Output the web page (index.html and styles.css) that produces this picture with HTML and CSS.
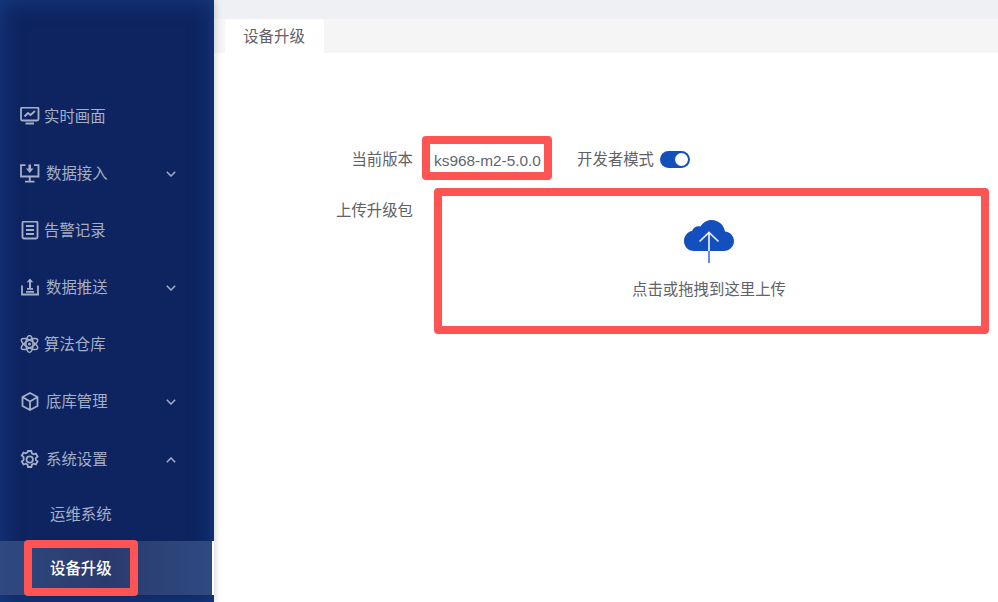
FILE: index.html
```html
<!DOCTYPE html>
<html lang="zh-CN">
<head>
<meta charset="utf-8">
<title>设备升级</title>
<link rel="stylesheet" href="styles.css">
</head>
<body>
<div class="app">
  <aside class="sidebar">
    <nav class="menu">
      <div class="item"><svg class="ico" viewBox="0 0 20 20"><rect x="1" y="0.500" width="17.500" height="13" rx="1.500"/><path d="M4.500 9.500l3.500-3.500 2.500 2 4.500-4M5.500 16.500h8.500"/></svg><span class="label">实时画面</span></div>
      <div class="item sub"><svg class="ico" viewBox="0 0 20 20"><path d="M5.500 1.200H1v11.300h17.500V1.200H14M9.750 12.500v4.500M5 17.700h9.500"/><path class="fill" d="M8.500.5h2.500v4h2.500L9.750 9 6 4.500h2.500z"/></svg><span class="label wide">数据接入</span><svg class="chev" viewBox="0 0 10 6"><path d="M.8.8L5 5l4.200-4.200"/></svg></div>
      <div class="item"><svg class="ico" viewBox="0 0 20 20"><rect x="2.500" y="0.500" width="15" height="17" rx="1.500"/><path d="M6 5h8M6 9h8M6 13h8"/></svg><span class="label">告警记录</span></div>
      <div class="item sub"><svg class="ico" viewBox="0 0 20 20"><path d="M2 7.500v9h16v-9M6 13.800h8M7 10.800h6"/><path class="fill" d="M10 .5l3.300 3.700H11v6H9v-6H6.700z"/></svg><span class="label wide">数据推送</span><svg class="chev" viewBox="0 0 10 6"><path d="M.8.8L5 5l4.200-4.200"/></svg></div>
      <div class="item"><svg class="ico atom" viewBox="0 0 20 20"><ellipse cx="9.500" cy="9" rx="9.200" ry="3.600" transform="rotate(30 9.500 9)"/><ellipse cx="9.500" cy="9" rx="9.200" ry="3.600" transform="rotate(-30 9.500 9)"/><ellipse cx="9.500" cy="9" rx="8.500" ry="3.600" transform="rotate(90 9.500 9)"/><circle class="fill" cx="9.500" cy="9" r="1.500"/></svg><span class="label">算法仓库</span></div>
      <div class="item sub"><svg class="ico" viewBox="0 0 20 20"><path d="M10 1l7.500 4v9l-7.500 4-7.500-4V5zM2.500 5l7.500 4.500L17.500 5M10 9.500V18"/></svg><span class="label wide">底库管理</span><svg class="chev" viewBox="0 0 10 6"><path d="M.8.8L5 5l4.200-4.200"/></svg></div>
      <div class="item sub open"><svg class="ico" viewBox="0 0 20 20"><path d="M8 1h3.400l.5 2.400 1.700.9 2.300-.8 1.700 3-1.800 1.600v1.800l1.800 1.600-1.700 3-2.300-.8-1.700.9-.5 2.400H8l-.5-2.400-1.700-.9-2.300.8-1.700-3 1.800-1.600V7.100L1.800 5.500l1.700-3 2.300.8 1.700-.9z"/><circle cx="9.700" cy="9.500" r="3.200"/></svg><span class="label wide">系统设置</span><svg class="chev" viewBox="0 0 10 6"><path d="M.8 5.200L5 1l4.200 4.200"/></svg></div>
      <div class="child">运维系统</div>
      <div class="child active">设备升级</div>
    </nav>
    <span class="mark mark-menu"></span>
  </aside>
  <main class="main">
    <div class="top"></div>
    <div class="tabs"><div class="tab">设备升级</div></div>
    <section class="content">
      <div class="row version-row">
        <span class="field">当前版本</span>
        <span class="version">ks968-m2-5.0.0</span>
        <span class="dev">开发者模式</span>
        <span class="switch"><span class="knob"></span></span>
      </div>
      <div class="row upload-row">
        <span class="field">上传升级包</span>
        <div class="upload">
          <svg class="cloud" viewBox="0 0 50 43"><path class="cloud-body" d="M10 31C4.500 31 0 27 0 21 0 15.500 4 11.500 8 11 9.500 7 13 5.500 16.500 6.500 19 2.500 23 0 27.500 0c7 0 12.500 5 13.500 11.500 5 .3 9 4.500 9 9.500 0 5.500-4.500 10-10 10z"/><path class="cloud-arrow" d="M25 31V13M15.500 21.500L25 12.500l9.500 9"/><path class="cloud-stem" d="M25 31v12"/></svg>
          <p class="hint">点击或拖拽到这里上传</p>
        </div>
      </div>
    </section>
  </main>
</div>
<span class="mark mark-version"></span>
<span class="mark mark-upload"></span>
</body>
</html>
```
FILE: styles.css
```css
* { box-sizing: border-box; }
html, body { margin: 0; height: 100%; overflow: hidden; }
body {
  position: relative;
  background: #fff;
  font-family: "Liberation Sans", "Noto Sans CJK SC", sans-serif;
  font-size: 15.4px;
  color: #606266;
}
.app { display: flex; height: 602px; }

.sidebar {
  position: relative;
  flex: 0 0 214px;
  background: #0e2460;
  box-shadow: inset 0 0 22px 1px #163c80, 2px 0 6px rgba(0, 0, 0, .14);
  padding-top: 88px;
  z-index: 1;
}
.menu { display: flex; flex-direction: column; }
.item {
  display: flex;
  align-items: center;
  height: 57px;
  padding-left: 20px;
  color: #a5afc6;
}
.item.open { padding-top: 2px; }
.ico {
  width: 20px;
  height: 20px;
  flex: none;
  fill: none;
  stroke: #a5afc6;
  stroke-width: 1.800;
}
.ico.atom { stroke-width: 1.500; }
.ico .fill { fill: #a5afc6; stroke: none; }
.label { margin-left: 4px; line-height: 20px; }
.label.wide { margin-left: 6px; }
.chev {
  width: 10px;
  height: 6px;
  margin-left: auto;
  margin-right: 38px;
  fill: none;
  stroke: #a5afc6;
  stroke-width: 1.500;
}
.child {
  height: 54px;
  line-height: 56px;
  padding-left: 50px;
  color: #a5afc6;
}
.child.active {
  color: #fff;
  font-weight: 500;
  background: linear-gradient(90deg, #2f4a80 0, #2a3a6e 50%, #2f4a80 100%);
  border-right: 2px solid #fff;
}

.main { flex: 1; display: flex; flex-direction: column; min-width: 0; }
.top { height: 19px; background: #eff0f4; }
.tabs { height: 34px; background: #f5f5f5; padding-left: 11px; }
.tab {
  width: 99px;
  height: 34px;
  padding-right: 1px;
  line-height: 36px;
  text-align: center;
  background: #fff;
  border-radius: 3px 3px 0 0;
  color: #606266;
}
.content { flex: 1; padding-top: 91px; }
.row { display: flex; }
.version-row { align-items: center; height: 30px; }
.field { width: 199px; text-align: right; line-height: 30px; }
.version-row .field { padding-top: 2px; }
.version { margin-left: 21px; width: 124px; padding-top: 3px; color: #5f6670; }
.dev { margin-left: 19px; margin-top: -2px; }
.switch {
  width: 30px;
  height: 17px;
  margin-left: 6px;
  border-radius: 9px;
  background: #1450bd;
  position: relative;
}
.knob {
  position: absolute;
  top: 2px;
  right: 2px;
  width: 13px;
  height: 13px;
  border-radius: 50%;
  background: #fff;
}
.upload-row { margin-top: 11px; }
.upload-row .field { line-height: 20px; margin-top: 16px; }
.upload {
  width: 540px;
  margin-left: 26px;
  padding-top: 35px;
  text-align: center;
}
.cloud { display: block; width: 50px; height: 43px; margin: 0 auto; }
.cloud-body { fill: #1450bd; }
.cloud-arrow { fill: none; stroke: #e8eefa; stroke-width: 1.700; }
.cloud-stem { fill: none; stroke: #4a78d0; stroke-width: 1.700; }
.hint { margin: 17px 0 0; line-height: 20px; color: #606266; }

.mark {
  position: absolute;
  border: 8px solid #ff5454;
  border-radius: 4px;
  pointer-events: none;
  z-index: 2;
}
.mark-menu { left: 24px; top: 540px; width: 114px; height: 56px; }
.mark-version { left: 422px; top: 136px; width: 130px; height: 44px; }
.mark-upload { left: 434px; top: 188px; width: 555px; height: 146px; }
```
